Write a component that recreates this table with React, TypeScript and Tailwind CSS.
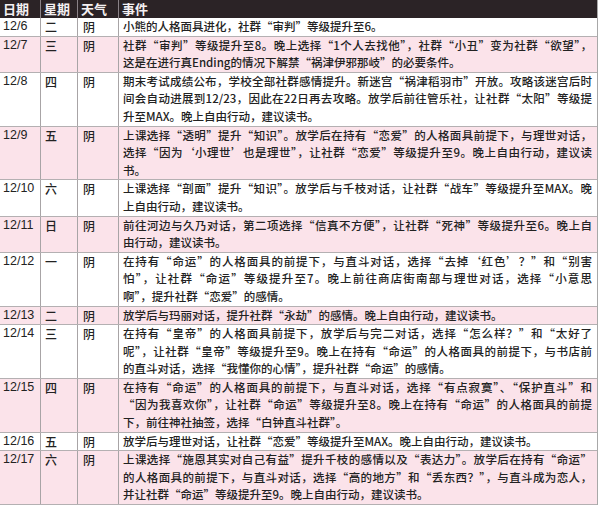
import React from "react";

type Row = { date: string; wd: string; lines: string[] };

const rows: Row[] = [
  { date: "12/6", wd: "二", lines: ["小熊的人格面具进化，社群“审判”等级提升至6。"] },
  {
    date: "12/7",
    wd: "三",
    lines: [
      "社群“审判”等级提升至8。晚上选择“1个人去找他”，社群“小丑”变为社群“欲望”，",
      "这是在进行真Ending的情况下解禁“祸津伊邪那岐”的必要条件。",
    ],
  },
  {
    date: "12/8",
    wd: "四",
    lines: [
      "期末考试成绩公布，学校全部社群感情提升。新迷宫“祸津稻羽市”开放。攻略该迷宫后时",
      "间会自动进展到12/23，因此在22日再去攻略。放学后前往管乐社，让社群“太阳”等级提",
      "升至MAX。晚上自由行动，建议读书。",
    ],
  },
  {
    date: "12/9",
    wd: "五",
    lines: [
      "上课选择“透明”提升“知识”。放学后在持有“恋爱”的人格面具前提下，与理世对话，",
      "选择“因为‘小理世’也是理世”，让社群“恋爱”等级提升至9。晚上自由行动，建议读",
      "书。",
    ],
  },
  {
    date: "12/10",
    wd: "六",
    lines: [
      "上课选择“剖面”提升“知识”。放学后与千枝对话，让社群“战车”等级提升至MAX。晚",
      "上自由行动，建议读书。",
    ],
  },
  {
    date: "12/11",
    wd: "日",
    lines: [
      "前往河边与久乃对话，第二项选择“信真不方便”，让社群“死神”等级提升至6。晚上自",
      "由行动，建议读书。",
    ],
  },
  {
    date: "12/12",
    wd: "一",
    lines: [
      "在持有“命运”的人格面具的前提下，与直斗对话，选择“去掉‘红色’？”和“别害",
      "怕”，让社群“命运”等级提升至7。晚上前往商店街南部与理世对话，选择“小意思",
      "啊”，提升社群“恋爱”的感情。",
    ],
  },
  {
    date: "12/13",
    wd: "二",
    lines: ["放学后与玛丽对话，提升社群“永劫”的感情。晚上自由行动，建议读书。"],
  },
  {
    date: "12/14",
    wd: "三",
    lines: [
      "在持有“皇帝”的人格面具前提下，放学后与完二对话，选择“怎么样？”和“太好了",
      "呢”，让社群“皇帝”等级提升至9。晚上在持有“命运”的人格面具的前提下，与书店前",
      "的直斗对话，选择“我懂你的心情”，提升社群“命运”的感情。",
    ],
  },
  {
    date: "12/15",
    wd: "四",
    lines: [
      "在持有“命运”的人格面具的前提下，与直斗对话，选择“有点寂寞”、“保护直斗”和",
      "“因为我喜欢你”，让社群“命运”等级提升至8。晚上在持有“命运”的人格面具的前提",
      "下，前往神社抽签，选择“白钟直斗社群”。",
    ],
  },
  {
    date: "12/16",
    wd: "五",
    lines: ["放学后与理世对话，让社群“恋爱”等级提升至MAX。晚上自由行动，建议读书。"],
  },
  {
    date: "12/17",
    wd: "六",
    lines: [
      "上课选择“施恩其实对自己有益”提升千枝的感情以及“表达力”。放学后在持有“命运”",
      "的人格面具的前提下，与直斗对话，选择“高的地方”和“丢东西？”，与直斗成为恋人，",
      "并让社群“命运”等级提升至9。晚上自由行动，建议读书。",
    ],
  },
];

const cjk = "font-['Noto_Sans_CJK_SC','Liberation_Sans',sans-serif]";

export default function App() {
  return (
    <div className="w-[600px] h-[505px] bg-white overflow-hidden text-[#222]">
      <div className="w-[598px] border-r border-[#a8a8a8]">
        {/* header */}
        <div className={`flex h-[18px] bg-[#2b2326] text-[#f4f0f2] text-[13px] leading-[18px] font-bold ${cjk}`}>
          <div className="w-[41px] pl-[3px] border-r border-[#8a8287]">日期</div>
          <div className="w-[37px] pl-[3px] border-r border-[#8a8287]">星期</div>
          <div className="w-[41px] pl-[3px] border-r border-[#8a8287]">天气</div>
          <div className="flex-1 pl-[3px]">事件</div>
        </div>
        {rows.map((r, i) => (
          <div
            key={r.date}
            className={`flex border-b border-[#b4b0b2] ${i % 2 === 1 ? "bg-[#fbe3ea]" : "bg-white"}`}
          >
            <div className="w-[41px] shrink-0 pl-[3px] border-r border-[#a8a4a6] text-[12.5px] leading-[17.6px] font-['Liberation_Sans',sans-serif]">
              {r.date}
            </div>
            <div className={`w-[37px] shrink-0 pl-[4px] border-r border-[#a8a4a6] text-[12px] leading-[17.6px] font-medium ${cjk}`}>
              {r.wd}
            </div>
            <div className={`w-[41px] shrink-0 pl-[5px] border-r border-[#a8a4a6] text-[12px] leading-[17.6px] font-medium ${cjk}`}>
              阴
            </div>
            <div className={`flex-1 min-w-0 pl-[4px] pr-[5px] text-[11.5px] leading-[17.6px] font-medium ${cjk}`}>
              {r.lines.map((l, j) => (
                <div
                  key={j}
                  className={`whitespace-nowrap ${
                    j < r.lines.length - 1 ? "text-justify [text-align-last:justify]" : ""
                  }`}
                >
                  {l}
                </div>
              ))}
            </div>
          </div>
        ))}
      </div>
    </div>
  );
}
